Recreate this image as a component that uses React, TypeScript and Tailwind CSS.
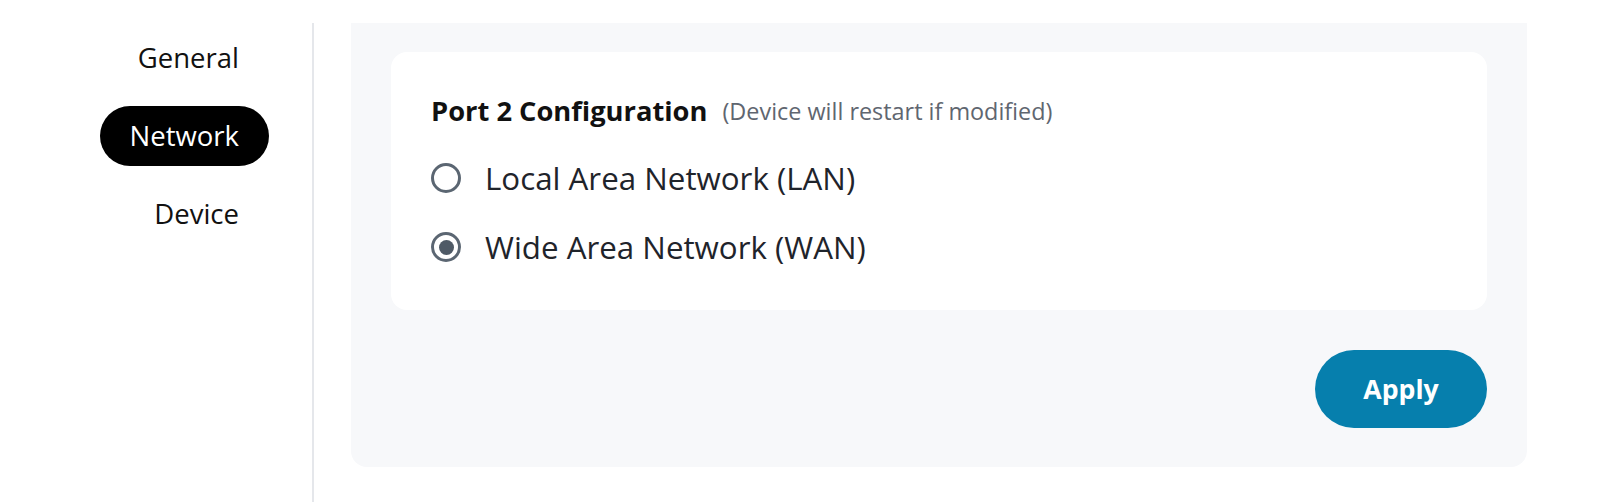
import React from "react";

function Radio({ checked }: { checked: boolean }) {
  return (
    <span className="flex h-[30px] w-[30px] shrink-0 items-center justify-center rounded-full border-[3.5px] border-[#5b6672] bg-white">
      {checked ? <span className="h-[15px] w-[15px] rounded-full bg-[#4f5a66]" /> : null}
    </span>
  );
}

export default function App() {
  const items = ["General", "Network", "Device"];
  return (
    <div className="flex h-[502px] w-[1600px] bg-white pt-[23px] font-['Open_Sans',sans-serif]">
      <nav className="flex w-[314px] shrink-0 flex-col items-end gap-[18px] border-r-2 border-[#e5e7eb] pr-[43px] pt-[5px]">
        {items.map((it) => (
          <div
            key={it}
            className={
              it === "Network"
                ? "flex h-[60px] items-center rounded-full bg-black px-[30px] text-[27.5px] leading-[36px] text-white"
                : "flex h-[60px] items-center rounded-full px-[30px] text-[27.5px] leading-[36px] text-[#111111]"
            }
          >
            {it}
          </div>
        ))}
      </nav>
      <main className="ml-[37px] flex w-[1176px] flex-col self-start rounded-b-2xl bg-[#f7f8fa] px-10 pb-[39px] pt-[29px]">
        <section className="flex flex-col gap-[25px] rounded-2xl bg-white px-10 pb-[41px] pt-[39px]">
          <div className="flex h-10 items-center gap-[15px]">
            <span className="text-[27.3px] font-bold leading-10 text-[#111111]">Port 2 Configuration</span>
            <span className="text-[23.4px] leading-10 text-[#5f6670]">(Device will restart if modified)</span>
          </div>
          <label className="flex h-[44px] items-center gap-[24px] text-[31.3px] leading-[44px] text-[#1f242b]">
            <Radio checked={false} />
            <span>Local Area Network (LAN)</span>
          </label>
          <label className="flex h-[44px] items-center gap-[24px] text-[31.3px] leading-[44px] text-[#1f242b]">
            <Radio checked={true} />
            <span>Wide Area Network (WAN)</span>
          </label>
        </section>
        <div className="mt-10 flex justify-end">
          <button className="flex h-[78px] w-[172px] items-center justify-center rounded-full bg-[#067fad] text-[26.67px] font-bold text-white">
            Apply
          </button>
        </div>
      </main>
    </div>
  );
}
